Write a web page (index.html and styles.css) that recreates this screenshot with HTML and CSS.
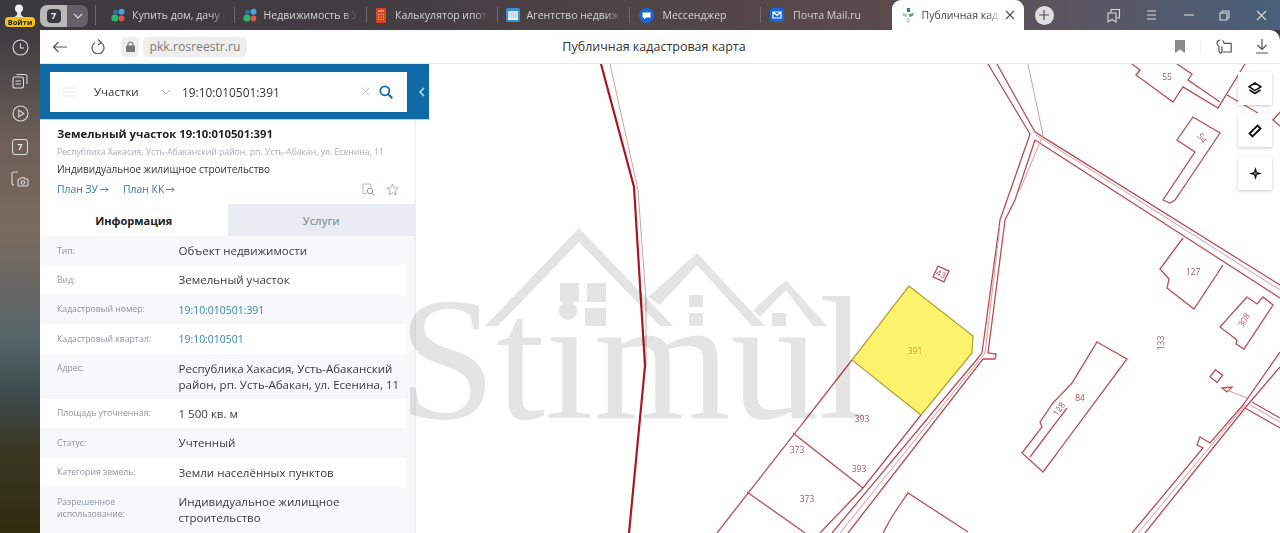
FILE: index.html
```html
<!DOCTYPE html>
<html lang="ru">
<head>
<meta charset="utf-8">
<title>Публичная кадастровая карта</title>
<link rel="stylesheet" href="styles.css">
</head>
<body>
<div class="browser">
  <header class="tabbar">
    <div class="login">
      <svg class="avatar" width="14" height="16" viewBox="0 0 14 16"><circle cx="7" cy="4.500" r="4" fill="#f1f1f1"/><path d="M5 8h4v3l4 3H1l4-3z" fill="#e4e4e4"/></svg>
      <span class="login-badge">Войти</span>
    </div>
    <div class="count">
      <span class="count-num"><span class="hex">7</span></span>
      <span class="count-more"><svg width="10" height="6" viewBox="0 0 10 6"><path d="M1 1l4 4 4-4" class="ic-light"/></svg></span>
    </div>
    <span class="count-sep"></span>
    <div class="tab tab-first">
      <svg class="fav" width="14" height="14" viewBox="0 0 14 14"><circle cx="4" cy="10" r="3.600" fill="#2fb56a"/><circle cx="10.500" cy="3.800" r="3" fill="#4a9fe0"/><circle cx="4.600" cy="4.200" r="2.400" fill="#2d6fb5"/><circle cx="10.500" cy="10.400" r="2.800" fill="#e0564a"/></svg>
      <span class="tab-text">Купить дом, дачу и участок</span>
    </div>
    <div class="tab">
      <svg class="fav" width="14" height="14" viewBox="0 0 14 14"><circle cx="4" cy="10" r="3.600" fill="#2fb56a"/><circle cx="10.500" cy="3.800" r="3" fill="#4a9fe0"/><circle cx="4.600" cy="4.200" r="2.400" fill="#2d6fb5"/><circle cx="10.500" cy="10.400" r="2.800" fill="#e0564a"/></svg>
      <span class="tab-text">Недвижимость в Усть-Абакане</span>
    </div>
    <div class="tab">
      <svg class="fav" width="14" height="15" viewBox="0 0 14 15"><rect x="2" y="0" width="10" height="15" rx="1" fill="#d8461f"/><path d="M4 3h6M4 6.500h1M6.500 6.500h1M9 6.500h1M4 9h1M6.500 9h1M9 9h1M4 11.500h1M6.500 11.500h1M9 11.500h1" stroke="#f3c2a8" stroke-width="1.200"/></svg>
      <span class="tab-text">Калькулятор ипотеки онлайн</span>
    </div>
    <div class="tab">
      <svg class="fav" width="14" height="14" viewBox="0 0 14 14"><rect width="14" height="14" rx="2" fill="#3f8fc4"/><rect x="2" y="3" width="10" height="7" fill="#c9dde8"/><path d="M2 10h10v2H2z" fill="#e9f1f5"/></svg>
      <span class="tab-text">Агентство недвижимости</span>
    </div>
    <div class="tab tab-wide">
      <svg class="fav" width="15" height="15" viewBox="0 0 15 15"><circle cx="7.500" cy="7.500" r="7.500" fill="#1667d9"/><path d="M3.500 4.500h8v5H7l-2 2v-2H3.500z" fill="#fff"/></svg>
      <span class="tab-text">Мессенджер</span>
    </div>
    <div class="tab tab-wide">
      <svg class="fav" width="14" height="14" viewBox="0 0 14 14"><rect width="14" height="14" rx="2.500" fill="#1667d9"/><path d="M3 4h8v6H3zM3 4l4 3.500L11 4" fill="none" stroke="#fff" stroke-width="1.200"/></svg>
      <span class="tab-text">Почта Mail.ru</span>
    </div>
    <div class="tab tab-active">
      <svg class="fav" width="12" height="15" viewBox="0 0 12 15"><path d="M5 0h3v4H5z" fill="#2b79b8"/><path d="M0 5l5 1v3L1 8z" fill="#9ecbe0"/><path d="M7 6l5-1-1 3-4 1z" fill="#4cb05c"/><path d="M5 10h2.500v5H5z" fill="#c5d9c5"/></svg>
      <span class="tab-text">Публичная кадастровая карта</span>
      <svg class="tab-close" width="10" height="10" viewBox="0 0 10 10"><path d="M1 1l8 8M9 1l-8 8" class="ic-dark"/></svg>
    </div>
    <div class="newtab"><svg width="10" height="10" viewBox="0 0 10 10"><path d="M5 0v10M0 5h10" class="ic-dark"/></svg></div>
    <div class="win">
      <svg width="14" height="15" viewBox="0 0 14 15"><path d="M1 5h8v9l-4-2.500L1 14zM4 5V1.500h8.500V10L9 10" class="ic-light"/></svg>
      <svg width="12" height="10" viewBox="0 0 12 10"><path d="M1 1h9M1 5h9M1 9h9" class="ic-light"/></svg>
      <svg width="10" height="2" viewBox="0 0 10 2"><path d="M0 1h10" class="ic-light"/></svg>
      <svg width="11" height="11" viewBox="0 0 11 11"><path d="M1 3h7v7H1zM3 3V1h7v7H8" class="ic-light"/></svg>
      <svg width="11" height="11" viewBox="0 0 11 11"><path d="M1 1l9 9M10 1l-9 9" class="ic-light"/></svg>
    </div>
  </header>

  <nav class="rail">
    <svg width="17" height="17" viewBox="0 0 17 17"><circle cx="8.500" cy="8.500" r="7.500" class="ic-light"/><path d="M8.500 4.500v4.500h3.500" class="ic-light"/></svg>
    <svg width="16" height="16" viewBox="0 0 16 16"><rect x="1" y="4" width="10.500" height="11" rx="2" class="ic-light"/><path d="M4.500 1.500h8.500a2 2 0 0 1 2 2V11M3.500 8h5.500M3.500 11h5.500" class="ic-light"/></svg>
    <svg width="17" height="17" viewBox="0 0 17 17"><circle cx="8.500" cy="8.500" r="7.500" class="ic-light"/><path d="M6.800 5.200l5 3.300-5 3.300z" class="ic-light"/></svg>
    <span class="rail-seven">7</span>
    <svg width="18" height="17" viewBox="0 0 18 17"><path d="M7 1H3a2 2 0 0 0-2 2v9a2 2 0 0 0 2 2" class="ic-light"/><path d="M8 8h1.500l1-1.500h2.500l1 1.500H16a1 1 0 0 1 1 1v5a1 1 0 0 1-1 1H8a1 1 0 0 1-1-1V9a1 1 0 0 1 1-1z" class="ic-light"/><circle cx="12" cy="11.500" r="1.800" class="ic-light"/></svg>
  </nav>

  <main class="main">
    <div class="addr">
      <div class="addr-left">
        <svg class="addr-back" width="15" height="12" viewBox="0 0 15 12"><path d="M15 6H1.500M6.500 1l-5 5 5 5" class="ic-dark"/></svg>
        <svg class="addr-reload" width="14" height="15" viewBox="0 0 14 15"><path d="M4 3.600a6 6 0 1 0 6 0M7 .5l3.200 3L7 6" class="ic-dark"/></svg>
        <span class="chip chip-lock"><svg width="9" height="11" viewBox="0 0 9 11"><path d="M2 5V3.500a2.500 2.500 0 0 1 5 0V5" fill="none" stroke="#777" stroke-width="1.200"/><rect y="4.500" width="9" height="6.500" rx="1" fill="#777"/></svg></span>
        <span class="chip chip-url">pkk.rosreestr.ru</span>
      </div>
      <div class="addr-title">Публичная кадастровая карта</div>
      <div class="addr-right">
        <svg width="10" height="13" viewBox="0 0 10 13"><path d="M0 0h10v13L5 9.500 0 13z" fill="#8a8a8a"/></svg>
        <span class="addr-sep"></span>
        <svg class="addr-keys" width="16" height="15" viewBox="0 0 16 15"><path d="M4.500 1C2.500 1 1 2.500 1 4.300c0 1.400.8 2.500 2 3V13l1.700 1.300L6 13V7.300" class="ic-dark"/><path d="M6.500 1.500c1 .6 1.500 1.700 1.500 2.800h7.200V13H6.800" class="ic-dark"/></svg>
        <svg class="addr-dl" width="14" height="15" viewBox="0 0 14 15"><path d="M7 0v10M2.500 6L7 10.500 11.500 6M1 14h12" class="ic-dark"/></svg>
      </div>
    </div>

    <div class="map">
      <svg class="canvas" width="1240" height="469" viewBox="40 64 1240 469">
        <polygon class="parcel" points="909,286 973,336 972,353 921,415 852,360"/>
        <g class="ln">
          <path d="M988,64 L1030,134 L1007,200 L1000,220 L982,353 L978,358 L832,533"/>
          <path d="M997,64 L1035,132 L1280,285"/>
          <path d="M1035,140 L1280,298"/>
          <path d="M1035,140 L1015,200 L1005,220 L988,353 L996,354 L995,359 L983,359 L848,533"/>
          <path d="M921,415 L863,488 L820,533"/>
          <path d="M852,360 L717,533"/>
          <path d="M793,433 L863,488"/>
          <path d="M747,492 L805,533"/>
          <path d="M883,533 L890,520 L895,512 L908,493 L968,532"/>
          <path d="M1097,342 L1127,359 L1043,472 L1022,453 L1042,427 L1040,422 L1053,403 L1072,383 Z"/>
          <path d="M1030,457 L1067,408"/>
          <path d="M1183,238 L1160,269 L1169,279 L1167,288 L1194,309 L1223,265"/>
          <path d="M1247,297 L1220,327 L1237,340 L1236,344 L1244,349 L1273,305 L1263,297 L1257,304 Z"/>
          <path d="M1132,64 L1140,70 L1136,75 L1173,102 L1183,87 L1218,108 L1245,64"/>
          <path d="M1177,64 L1192,74 L1188,80 L1220,102"/>
          <path d="M1227,95 L1258,113"/>
          <path d="M1280,112 L1273,120 L1280,126"/>
          <path d="M1193,117 L1177,140 L1195,152 L1163,200 L1170,203 L1175,200 L1220,133 Z"/>
          <path d="M1132,533 L1203,448 L1197,445 L1200,437 L1210,443 L1243,405 L1280,352"/>
          <path d="M1145,533 L1245,408 L1280,367"/>
          <path d="M1252,402 L1280,418"/>
          <path d="M1245,408 L1280,428"/>
          <rect x="1212" y="372" width="9" height="9" transform="rotate(38 1217 376)"/>
          <path d="M1222,388 L1232,387 L1227,392 Z"/>
          <rect x="935" y="268" width="12" height="12" transform="rotate(25 941 274)"/>
        </g>
        <g class="ln-soft">
          <path d="M1028,64 L1043,135 L1020,190"/>
          <path d="M1000,225 L985,353 L840,533"/>
          <path d="M1036,135 L1280,290"/>
          <path d="M1227,390 L1247,398"/>
          <path d="M1138,533 L1245,405"/>
          <path d="M1250,405 L1280,422"/>
        </g>
        <path class="river-soft" d="M610,64 L638,190 L646,300 L646,366"/>
        <path class="river" d="M601,64 L634,187 L645,366 L629,533"/>
        <g class="map-label">
          <text x="1167" y="80">55</text>
          <text x="1202" y="141" transform="rotate(55 1202 138)">54</text>
          <text x="941" y="277" transform="rotate(25 941 274)">43</text>
          <text x="1193" y="275">127</text>
          <text x="1244" y="323" transform="rotate(-58 1244 320)">308</text>
          <text x="1161" y="346" transform="rotate(-90 1161 343)">133</text>
          <text x="1080" y="401">84</text>
          <text x="1059" y="412" transform="rotate(-55 1059 409)">128</text>
          <text x="862" y="422">393</text>
          <text x="859" y="472">393</text>
          <text x="797" y="453">373</text>
          <text x="807" y="502">373</text>
          <text class="parcel-label" x="915" y="354">391</text>
        </g>
      </svg>

      <section class="panel">
        <div class="search">
          <div class="search-box">
            <svg class="s-menu" width="14" height="10" viewBox="0 0 14 10"><path d="M0 1h14M0 5h14M0 9h14" stroke="#e3e5e7" stroke-width="1.200"/></svg>
            <span class="s-type">Участки</span>
            <svg class="s-chev" width="10" height="6" viewBox="0 0 10 6"><path d="M1 1l4 4 4-4" fill="none" stroke="#aab" stroke-width="1"/></svg>
            <span class="s-input">19:10:010501:391</span>
            <svg class="s-x" width="9" height="9" viewBox="0 0 9 9"><path d="M.5.500l8 8M8.500.500l-8 8" stroke="#c3c7ca" stroke-width="1"/></svg>
            <svg width="14" height="14" viewBox="0 0 14 14"><circle cx="5.800" cy="5.800" r="4.500" fill="none" stroke="#0f6da8" stroke-width="1.800"/><path d="M9 9l4.300 4.300" stroke="#0f6da8" stroke-width="2"/></svg>
          </div>
          <svg class="s-collapse" width="6" height="10" viewBox="0 0 6 10"><path d="M5 1L1 5l4 4" fill="none" stroke="#bfe2f5" stroke-width="1.500"/></svg>
        </div>
        <div class="card">
          <h1 class="card-title">Земельный участок 19:10:010501:391</h1>
          <p class="card-addr">Республика Хакасия, Усть-Абаканский район, рп. Усть-Абакан, ул. Есенина, 11</p>
          <p class="card-use">Индивидуальное жилищное строительство</p>
          <div class="card-links">
            <a class="plan">План ЗУ <svg width="9" height="7" viewBox="0 0 9 7"><path d="M0 3.500h8M5.500 1L8 3.500 5.500 6" fill="none" stroke="#3a7ca5" stroke-width=".9"/></svg></a>
            <a class="plan">План КК <svg width="9" height="7" viewBox="0 0 9 7"><path d="M0 3.500h8M5.500 1L8 3.500 5.500 6" fill="none" stroke="#3a7ca5" stroke-width=".9"/></svg></a>
            <span class="card-icons">
              <svg width="13" height="13" viewBox="0 0 13 13"><path d="M5 10.500H1V1h8v3.500" fill="none" stroke="#b5b9bd"/><circle cx="8" cy="8" r="2.700" fill="none" stroke="#8d99a3"/><path d="M10 10l2.500 2.500" stroke="#8d99a3"/></svg>
              <svg width="13" height="13" viewBox="0 0 13 13"><path d="M6.500 1l1.700 3.700 4 .4-3 2.700.9 4-3.600-2.100-3.600 2.100.9-4-3-2.700 4-.4z" fill="none" stroke="#a5afb6"/></svg>
            </span>
          </div>
        </div>
        <div class="tabs">
          <div class="ptab ptab-on">Информация</div>
          <div class="ptab">Услуги</div>
        </div>
        <div class="info">
          <div class="rows">
            <div class="row"><span class="k">Тип:</span><span class="v">Объект недвижимости</span></div>
            <div class="row"><span class="k">Вид:</span><span class="v">Земельный участок</span></div>
            <div class="row"><span class="k">Кадастровый номер:</span><span class="v v-link">19:10:010501:391</span></div>
            <div class="row"><span class="k">Кадастровый квартал:</span><span class="v v-link">19:10:010501</span></div>
            <div class="row"><span class="k">Адрес:</span><span class="v">Республика Хакасия, Усть-Абаканский район, рп. Усть-Абакан, ул. Есенина, 11</span></div>
            <div class="row"><span class="k">Площадь уточненная:</span><span class="v">1 500 кв. м</span></div>
            <div class="row"><span class="k">Статус:</span><span class="v">Учтенный</span></div>
            <div class="row"><span class="k">Категория земель:</span><span class="v">Земли населённых пунктов</span></div>
            <div class="row"><span class="k">Разрешенное использование:</span><span class="v">Индивидуальное жилищное строительство</span></div>
          </div>
          <div class="track"></div>
        </div>
      </section>

      <div class="tools">
        <button class="tool"><svg width="14" height="14" viewBox="0 0 14 14"><path d="M7 1l6 3.800L7 8.600 1 4.800zM1.500 8L7 11.500 12.500 8" fill="none" stroke="#111" stroke-width="1.600"/></svg></button>
        <button class="tool"><svg width="14" height="14" viewBox="0 0 14 14"><path d="M9.500 1.500l3 3-8 8-3-3z" fill="none" stroke="#111" stroke-width="1.900"/></svg></button>
        <button class="tool tool-last"><svg width="13" height="13" viewBox="0 0 13 13"><path d="M6.500 0l1.500 5 5 1.500-5 1.500-1.500 5-1.500-5-5-1.500 5-1.500z" fill="#111"/><circle cx="6.500" cy="6.500" r="1.300" fill="#888"/></svg></button>
      </div>

      <div class="mark">
        <svg class="mark-houses" width="470" height="130" viewBox="410 220 470 130">
          <path class="pane" d="M485,326 L579,228 L673,326 H660 L579,242 L498,326 Z"/>
          <path class="pane" d="M648,297 L697,253 L765,326 H752 L697,265 L660,305 Z"/>
          <path class="pane" d="M753,310 L786,280 L827,326 H813 L786,290 L760,317 Z"/>
          <path class="pane" d="M560,283h19v19h-19zM587,283h19v19h-19zM585,308h21v18h-21zM689,295h14v12h-14zM689,313h14v13h-14zM772,313h14v13h-14z"/>
        </svg>
        <span class="mark-text">Stimul</span>
      </div>
    </div>
  </main>
</div>
</body>
</html>
```
FILE: styles.css
```css
* { box-sizing: border-box; }
html, body { margin: 0; height: 100%; overflow: hidden; }
body { font-family: "Open Sans", "Noto Sans", "Liberation Sans", sans-serif; color: #2b2b2b; background: #3b3a3e; }
svg { display: block; flex: none; }
h1, p { margin: 0; }

.ic-light { fill: none; stroke: #d9d9d9; stroke-width: 1.100; }
.ic-dark { fill: none; stroke: #555; stroke-width: 1.200; }

.browser {
  height: 533px;
  display: grid;
  grid-template-columns: 40px 1fr;
  grid-template-rows: 30px 1fr;
  filter: blur(.4px);
}

.tabbar {
  grid-column: 1 / 3;
  display: flex;
  align-items: center;
  background: linear-gradient(90deg, #3b3a3f 0%, #453e42 35%, #5b4a4b 68%, #5a5662 84%, #4a5f7a 100%);
}
.login { position: relative; width: 40px; height: 30px; flex: none; }
.avatar { position: absolute; left: 12px; top: 4px; }
.login-badge {
  position: absolute; left: 5px; top: 17px; width: 30px; height: 10px;
  background: #f4c21b; border-radius: 4px; color: #222;
  font-size: 7.500px; font-weight: 700; line-height: 10px; text-align: center;
}
.count { display: flex; width: 48px; height: 22px; margin-top: 1px; flex: none; }
.count-num { width: 27px; background: #b9b9b9; border-radius: 7px 0 0 7px; display: flex; align-items: center; justify-content: center; }
.hex { width: 14px; height: 14px; background: #3a3a3e; color: #eee; border-radius: 4px; font-size: 9px; font-weight: 700; line-height: 14px; text-align: center; }
.count-more { width: 21px; background: #63606a; border-radius: 0 7px 7px 0; display: flex; align-items: center; justify-content: center; }
.count-sep { width: 1px; height: 20px; flex: none; margin: 0 6.500px 0 7px; background: #6c686c; }

.tab {
  width: 131.500px; height: 30px; flex: none;
  display: flex; align-items: center;
  padding-left: 8.500px;
  color: #d4d3d4; font-size: 10.500px;
  position: relative;
  white-space: nowrap; overflow: hidden;
}
.tab::before { content: ""; position: absolute; left: 0; top: 7px; height: 16px; width: 1px; background: #6c686c; }
.tab-first::before { display: none; }
.tab-text { margin-left: 7px; width: 94px; overflow: hidden; flex: none; -webkit-mask-image: linear-gradient(90deg, #000 84%, transparent 100%); mask-image: linear-gradient(90deg, #000 84%, transparent 100%); }
.tab-wide { padding-left: 10px; }
.tab-wide .tab-text { margin-left: 9px; }
.tab-active { width: 132px; background: #fff; color: #444; border-radius: 9px 9px 0 0; padding-left: 10px; }
.tab-active::before { display: none; }
.tab-active .tab-text { margin-left: 8px; width: 78px; }
.tab-close { margin-left: 5px; }
.newtab { width: 19px; height: 19px; margin-left: 11px; border-radius: 50%; background: #dedede; display: flex; align-items: center; justify-content: center; flex: none; }
.win { flex: 1; display: flex; align-items: center; justify-content: flex-end; gap: 25.500px; padding-right: 13.500px; }

.rail {
  display: flex; flex-direction: column; align-items: center;
  padding-top: 9px; gap: 16.500px;
  background: linear-gradient(180deg, #3d3b3f 0%, #6d5f58 22%, #7a6a60 40%, #556467 62%, #3e4a4c 72%, #383622 84%, #2f2c0f 100%);
}
.rail-seven { width: 16px; height: 16px; border: 1.100px solid #ddd; border-radius: 3px; color: #e8e8e8; font-size: 9px; font-weight: 700; line-height: 14px; text-align: center; }

.main { display: flex; flex-direction: column; min-width: 0; min-height: 0; background: #fff; border-radius: 0 10px 0 0; position: relative; overflow: hidden; }

.addr { height: 34px; flex: none; display: grid; grid-template-columns: 1fr auto 1fr; align-items: center; border-bottom: 1px solid #e9e9e9; padding-right: 12px; }
.addr-left { display: flex; align-items: center; padding-left: 12px; }
.addr-back { margin-right: 24px; }
.addr-reload { margin-right: 16px; }
.chip { background: #eeeeee; height: 20px; border-radius: 5px; display: flex; align-items: center; justify-content: center; }
.chip-lock { width: 18px; margin-right: 4px; }
.chip-url { width: 104px; color: #7b7b7b; font-size: 12.200px; }
.addr-title { font-size: 12.500px; color: #333; }
.addr-right { display: flex; align-items: center; justify-content: flex-end; }
.addr-sep { width: 1px; height: 14px; background: #eee; margin: 0 15px 0 15px; }
.addr-keys { margin-right: 23px; }
.addr-dl { margin-right: -1px; }

.map { flex: 1; position: relative; min-height: 0; }
.canvas { position: absolute; left: 0; top: 0; }
.ln path, .ln rect { fill: none; stroke: #ba4e56; stroke-width: 1.300; }
.ln-soft path { fill: none; stroke: #d79a9c; stroke-width: 1; }
.river { fill: none; stroke: #a81820; stroke-width: 2.200; }
.river-soft { fill: none; stroke: #c9a3a3; stroke-width: 1; }
.parcel { fill: #fbf36c; stroke: #b8a23a; stroke-width: 1.300; }
.map-label text { font-family: "Open Sans", sans-serif; font-size: 8.500px; fill: #a5555a; text-anchor: middle; }
.map-label .parcel-label { fill: #c9a02c; }

.panel { position: absolute; left: 0; top: 0; bottom: 0; width: 376px; background: #fff; display: flex; flex-direction: column; border-right: 1px solid #ebedef; }
.search { width: 389px; height: 56px; flex: none; background: #0f6aa5; padding: 8px 10px; display: flex; align-items: center; border-bottom: 1px solid #a9d8f2; }
.search-box { width: 357px; height: 40px; flex: none; background: #fff; display: flex; align-items: center; padding-left: 13px; }
.s-type { margin-left: 17px; width: 67px; font-size: 11.500px; color: #333; }
.s-chev { margin-right: 11px; }
.s-input { width: 179px; font-size: 11.900px; color: #333; }
.s-x { margin-right: 8.500px; }
.s-collapse { margin-left: 12px; }

.card { height: 84px; flex: none; padding: 6px 0 0 17px; display: flex; flex-direction: column; }
.card-title { font-size: 11.300px; font-weight: 700; line-height: 15px; color: #222; }
.card-addr { font-size: 8.650px; line-height: 12px; margin-top: 5px; color: #a7aeb6; white-space: nowrap; }
.card-use { font-size: 10px; line-height: 14px; margin-top: 4px; color: #333; }
.card-links { display: flex; align-items: center; margin-top: 6px; }
.plan { font-size: 10.400px; line-height: 14px; color: #3a7ca5; margin-right: 14px; display: flex; align-items: center; gap: 2px; }
.card-icons { margin-left: auto; display: flex; gap: 11px; padding-right: 16px; }

.tabs { display: flex; height: 32px; flex: none; }
.ptab { flex: 1; display: flex; align-items: center; justify-content: center; background: #e9edf3; color: #8d949c; font-size: 10.800px; font-weight: 600; }
.ptab-on { background: #fff; color: #222; font-size: 11px; font-weight: 700; }

.info { flex: 1; display: flex; min-height: 0; overflow: hidden; }
.rows { flex: 1; min-width: 0; }
.track { width: 9px; flex: none; background: #f8f8f9; }
.row { display: grid; grid-template-columns: 121.500px 1fr; padding: 7px 2px 6.400px 17px; }
.row:nth-child(odd) { background: #f6f8fa; }
.k { font-size: 8.700px; line-height: 12.500px; color: #8e949a; padding-top: 1.500px; padding-right: 24px; }
.v { font-size: 11.560px; line-height: 16px; color: #3a3a3a; }
.v-link { font-size: 10.450px; color: #3a84a8; }

.tools { position: absolute; left: 1198px; top: 8px; display: flex; flex-direction: column; }
.tool { width: 34px; height: 33px; border: 0; padding: 0; margin-bottom: 9px; background: #fff; box-shadow: 0 1px 3px rgba(0, 0, 0, .22); display: flex; align-items: center; justify-content: center; }
.tool-last { margin-top: 1px; }

.mark { position: absolute; left: 370px; top: 156px; width: 480px; height: 220px; pointer-events: none; opacity: .105; }
.mark-houses { position: absolute; left: 0; top: 0; }
.pane { fill: #000; }
.mark-text { position: absolute; left: -12px; top: 39px; font-family: "Liberation Serif", serif; font-size: 176px; line-height: 200px; color: #000; white-space: nowrap; }
```
